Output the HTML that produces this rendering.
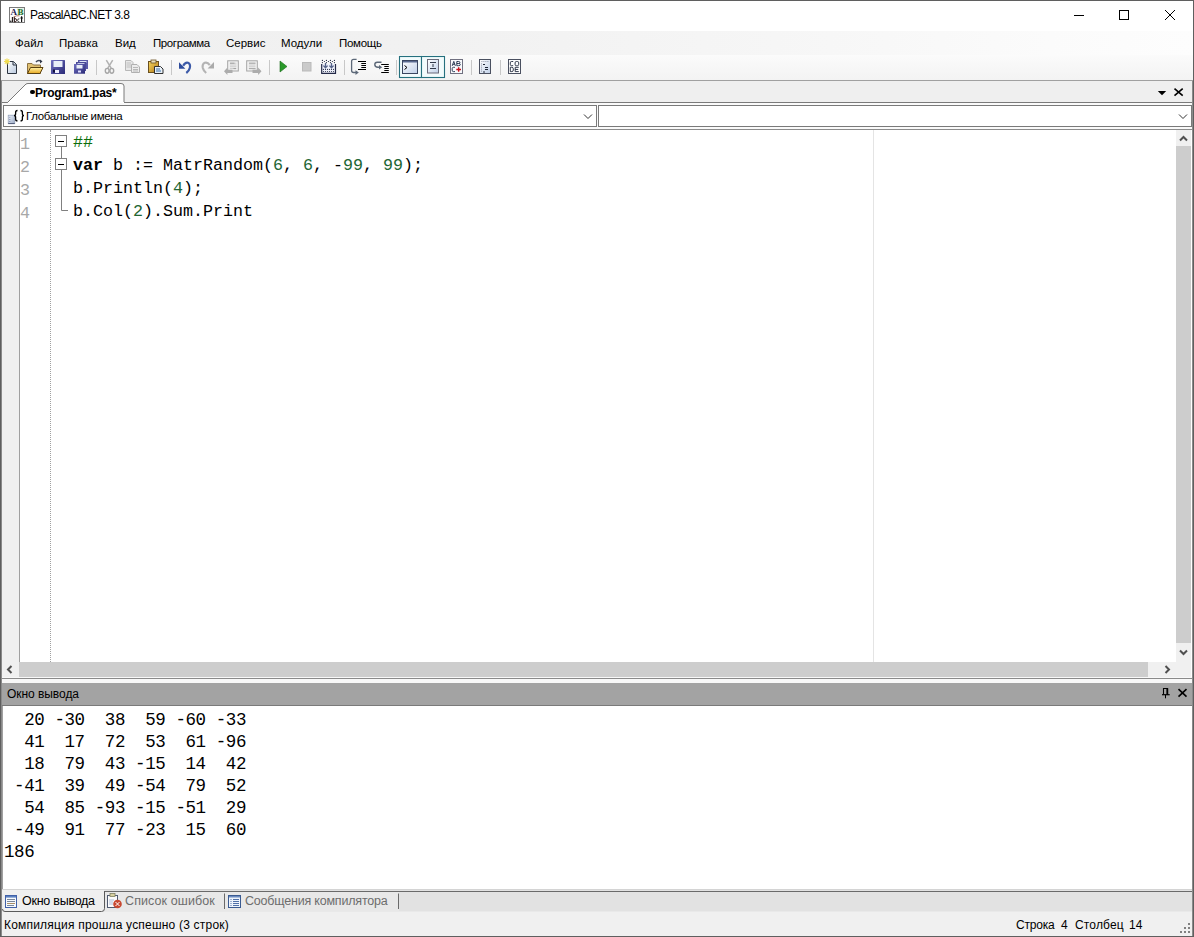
<!DOCTYPE html>
<html><head><meta charset="utf-8">
<style>
*{margin:0;padding:0;box-sizing:border-box}
html,body{width:1194px;height:937px;overflow:hidden;background:#fff}
body{position:relative;font-family:"Liberation Sans",sans-serif;font-size:12px;color:#000}
.a{position:absolute}
.ui{font-family:"Liberation Sans",sans-serif;font-size:11.5px;white-space:pre;line-height:14px}
.n{color:#226633}
.mono{font-family:"Liberation Mono",monospace;font-size:16.67px;white-space:pre}
</style></head><body>
<!-- window border -->
<div class="a" style="left:0;top:0;width:1194px;height:937px;border:1px solid #5f5f5f"></div>

<!-- title bar -->
<div class="a" style="left:1192px;top:81px;width:1px;height:855px;background:#8a8a8a;z-index:5"></div>
<div class="a" style="left:1px;top:81px;width:1px;height:855px;background:#8a8a8a;z-index:5"></div>
<div class="a" style="left:1px;top:1px;width:1192px;height:29px;background:#fff"></div>
<svg class="a" style="left:9px;top:7px" width="16" height="16">
<rect x="0.5" y="0.5" width="15" height="15" fill="#fff" stroke="#7a7a7a"/>
<rect x="8" y="1" width="7" height="6.5" fill="#e6f4e6"/>
<text x="1.6" y="7.6" font-family="Liberation Serif" font-size="9" font-weight="bold" fill="#1c1c54">A</text>
<text x="8.6" y="7.6" font-family="Liberation Serif" font-size="9" font-weight="bold" fill="#1a6a2a">B</text>
<circle cx="1.8" cy="14.3" r="0.8" fill="#101010"/>
<path d="M3.4 10V15M5.3 9.5V15" stroke="#1a1010" stroke-width="1.1"/>
<path d="M5.3 11.8Q7.6 11 7.6 13.3Q7.6 15 5.3 15" stroke="#3a2020" stroke-width="1" fill="none"/>
<path d="M10.4 11.8Q8.6 11.5 8.6 13.4Q8.6 15 10.4 15" stroke="#404040" stroke-width="1" fill="none"/>
<path d="M12.6 9.3V15M11.4 11H13.9" stroke="#101010" stroke-width="1.2"/>
<path d="M4.5 10.5Q7 8 10.5 8.8" stroke="#b07060" stroke-width="0.9" fill="none"/>
</svg>
<div class="a ui" style="left:30px;top:8px;font-size:12px;letter-spacing:-0.5px">PascalABC.NET 3.8</div>
<!-- window controls -->
<div class="a" style="left:1074px;top:15px;width:10px;height:1px;background:#000"></div>
<div class="a" style="left:1119px;top:10px;width:10px;height:10px;border:1px solid #000"></div>
<svg class="a" style="left:1164px;top:9px" width="12" height="12"><path d="M1 1L11 11M11 1L1 11" stroke="#000" stroke-width="1"/></svg>

<!-- menu bar -->
<div class="a" style="left:1px;top:31px;width:1192px;height:24px;background:linear-gradient(to right,#f0f0f0 0%,#f1f1f1 35%,#f6f6f6 65%,#fbfbfb 88%,#fdfdfd 100%)"></div>
<div class="a ui" style="left:15px;top:36px">Файл</div>
<div class="a ui" style="left:59px;top:36px">Правка</div>
<div class="a ui" style="left:115px;top:36px">Вид</div>
<div class="a ui" style="left:153px;top:36px;letter-spacing:-0.4px">Программа</div>
<div class="a ui" style="left:226px;top:36px">Сервис</div>
<div class="a ui" style="left:281px;top:36px">Модули</div>
<div class="a ui" style="left:339px;top:36px;letter-spacing:-0.3px">Помощь</div>

<!-- toolbar -->
<div class="a" style="left:1px;top:55px;width:1192px;height:25px;background:linear-gradient(#fbfbfb,#f3f3f3)"></div>
<div class="a" style="left:1px;top:80px;width:1192px;height:1px;background:#a0a0a0"></div>
<svg class="a" style="left:0;top:55px" width="530" height="25" viewBox="0 0 530 25">
<defs>
<linearGradient id="gPage" x1="0" y1="0" x2="1" y2="1"><stop offset="0" stop-color="#ffffff"/><stop offset="1" stop-color="#b8c8de"/></linearGradient>
<linearGradient id="gFold" x1="0" y1="0" x2="0" y2="1"><stop offset="0" stop-color="#fff2a8"/><stop offset="1" stop-color="#e8a820"/></linearGradient>
<linearGradient id="gDisk" x1="0" y1="0" x2="1" y2="1"><stop offset="0" stop-color="#7070c0"/><stop offset="1" stop-color="#2a2a78"/></linearGradient>
<linearGradient id="gClip" x1="0" y1="0" x2="1" y2="1"><stop offset="0" stop-color="#f8d860"/><stop offset="1" stop-color="#b07818"/></linearGradient>
<linearGradient id="gWin" x1="0" y1="0" x2="1" y2="1"><stop offset="0" stop-color="#ffffff"/><stop offset="1" stop-color="#c0d0e8"/></linearGradient>
</defs>
<!-- New -->
<path d="M7.5 6.5H13.5L16.5 9.5V18.5H7.5Z" fill="url(#gPage)" stroke="#2c3440" stroke-width="1"/>
<path d="M13 6.5V10H16.5" fill="#cfd8e6" stroke="#2c3440" stroke-width="1"/>
<path d="M4 6.5H10M7 3.5V9.5M4.8 4.3L9.2 8.7M9.2 4.3L4.8 8.7" stroke="#f0dc50" stroke-width="1.2"/>
<!-- Open -->
<path d="M27.5 8.5H32L33.5 10H40.5V18.5H27.5Z" fill="#e0c070" stroke="#8a7040" stroke-width="1"/>
<path d="M27.5 18.5L30.5 12.5H43L40 18.5Z" fill="url(#gFold)" stroke="#5a4010" stroke-width="1"/>
<path d="M36 7Q38 4.5 41 6" stroke="#404858" stroke-width="1.5" fill="none"/>
<path d="M40 4.5L42.5 6.5L40 8.5Z" fill="#303848"/>
<!-- Save -->
<rect x="51" y="5" width="14" height="14" rx="0.5" fill="url(#gDisk)"/>
<rect x="53.5" y="6" width="9" height="6" fill="#e8eef8"/>
<rect x="55" y="15" width="4" height="3" fill="#f0f0ff"/>
<rect x="53" y="14.5" width="2" height="3" fill="#101040"/>
<!-- Save all -->
<rect x="78" y="5" width="10" height="9" fill="#5a5aa8"/>
<rect x="79.5" y="6" width="7" height="1.5" fill="#e0e6f6"/>
<rect x="76" y="7" width="10" height="9" fill="#4a4a98"/>
<rect x="77.5" y="8.2" width="7" height="1.5" fill="#e0e6f6"/>
<rect x="74" y="9" width="11" height="9.7" fill="url(#gDisk)"/>
<rect x="76.5" y="10" width="6" height="3.5" fill="#e8eef8"/>
<rect x="78" y="15.5" width="3" height="2" fill="#e0e0ff"/>
<!-- sep -->
<rect x="96" y="5" width="1" height="15" fill="#c8c8c8"/>
<!-- Cut (disabled) -->
<path d="M106.3 5.2L111.2 13.2M112.7 5.2L107.8 13.2" stroke="#b2b2b2" stroke-width="1.5" fill="none"/>
<ellipse cx="107.2" cy="15.8" rx="1.9" ry="2.4" fill="none" stroke="#a6a6a6" stroke-width="1.4"/>
<ellipse cx="111.8" cy="15.8" rx="1.9" ry="2.4" fill="none" stroke="#a6a6a6" stroke-width="1.4"/>
<!-- Copy (disabled) -->
<path d="M125.5 5.5H131L133 7.5V15.5H125.5Z" fill="#e8e8e8" stroke="#b8b8b8"/>
<path d="M126.5 8H131M126.5 10H131M126.5 12H131" stroke="#c0c0c0"/>
<path d="M131.5 9.5H137L139.5 12V17.5H131.5Z" fill="#ececec" stroke="#b0b0b0"/>
<path d="M133 12.5H138M133 14.5H138M133 16H138" stroke="#b8b8b8"/>
<!-- Paste -->
<rect x="148.5" y="6.5" width="10" height="11" fill="url(#gClip)" stroke="#6a5020"/>
<rect x="151" y="5" width="5" height="3" fill="#e8e0c0" stroke="#6a5020" stroke-width="0.8"/>
<path d="M154.5 11.5H160.5L163 14V18.5H154.5Z" fill="#e8f0f8" stroke="#303030"/>
<path d="M156 14H160M156 16H161" stroke="#3a70a8" stroke-width="1.2"/>
<!-- sep -->
<rect x="171" y="5" width="1" height="15" fill="#c8c8c8"/>
<!-- Undo -->
<path d="M183.2 10.8Q185.3 7 188 7.8Q190.8 9 189.8 13Q189 16 186.3 18" stroke="#3c5aa8" stroke-width="2.2" fill="none"/>
<path d="M179 7.3V13.8H185.4Z" fill="#2e4c9c"/>
<!-- Redo (disabled) -->
<path d="M209.8 10.2Q207.5 6.8 204.8 7.8Q202 9 202.8 13Q203.6 16 206.2 18" stroke="#b4b4b4" stroke-width="2.2" fill="none"/>
<path d="M214 7V13.5H207.6Z" fill="#ababab"/>
<!-- Comment (disabled) -->
<rect x="227.7" y="5.8" width="10.6" height="10.2" fill="#f4f4f4" stroke="#a4a4a4" stroke-width="1"/>
<path d="M229.8 8.2H236.5M229.8 10H236.5M229.8 11.8H236.5M229.8 13.6H236.5" stroke="#c4c4c4" stroke-width="0.9"/>
<path d="M230 8.2H234.5M233.5 13.6H236" stroke="#a0a0a0" stroke-width="1"/>
<path d="M224 16.3L227.4 12.6V14.7H232.5V17.9H227.4V20Z" fill="#acacac"/>
<!-- Uncomment (disabled) -->
<rect x="246.7" y="5.8" width="10.6" height="10.2" fill="#f4f4f4" stroke="#a4a4a4" stroke-width="1"/>
<path d="M248.8 8.2H255.5M248.8 10H255.5M248.8 11.8H255.5M248.8 13.6H255.5" stroke="#c4c4c4" stroke-width="0.9"/>
<path d="M249 8.2H255.5M249 13.6H255.5" stroke="#a8a8a8" stroke-width="1"/>
<path d="M261.5 16.3L258.1 12.6V14.7H252.5V17.9H258.1V20Z" fill="#acacac"/>
<!-- sep -->
<rect x="269" y="5" width="1" height="15" fill="#c8c8c8"/>
<!-- Run -->
<path d="M280 6L287 11.5L280 17Z" fill="#2a9a2a" stroke="#1a6a1a" stroke-width="0.6"/>
<!-- Stop (disabled) -->
<rect x="302.5" y="7.5" width="8.5" height="8.5" fill="#cacaca" stroke="#bababa"/>
<!-- Compile -->
<rect x="322" y="9" width="13.5" height="9" fill="#eef0fa"/>
<path d="M321.7 9V18.4H335.5V9" stroke="#242a48" stroke-width="1.2" fill="none"/>
<path d="M325.5 8V12.6M323.4 10.6L325.5 12.8L327.6 10.6M331.5 8V12.6M329.4 10.6L331.5 12.8L333.6 10.6" stroke="#56648a" stroke-width="1.3" fill="none"/>
<circle cx="322.4" cy="5.4" r="0.6" fill="#202840"/><circle cx="326.4" cy="5.4" r="0.6" fill="#202840"/><circle cx="330.4" cy="5.4" r="0.6" fill="#202840"/><circle cx="334.4" cy="5.4" r="0.6" fill="#202840"/><circle cx="324.4" cy="6.5" r="0.6" fill="#202840"/><circle cx="328.4" cy="6.5" r="0.6" fill="#202840"/><circle cx="332.4" cy="6.5" r="0.6" fill="#202840"/><circle cx="322.4" cy="7.6" r="0.6" fill="#202840"/><circle cx="326.4" cy="7.6" r="0.6" fill="#202840"/><circle cx="330.4" cy="7.6" r="0.6" fill="#202840"/><circle cx="334.4" cy="7.6" r="0.6" fill="#202840"/><circle cx="323.5" cy="14.4" r="0.55" fill="#303850"/><circle cx="325.5" cy="14.4" r="0.55" fill="#303850"/><circle cx="327.5" cy="14.4" r="0.55" fill="#303850"/><circle cx="329.5" cy="14.4" r="0.55" fill="#303850"/><circle cx="331.5" cy="14.4" r="0.55" fill="#303850"/><circle cx="333.5" cy="14.4" r="0.55" fill="#303850"/><circle cx="323.5" cy="16.5" r="0.55" fill="#303850"/><circle cx="325.5" cy="16.5" r="0.55" fill="#303850"/><circle cx="327.5" cy="16.5" r="0.55" fill="#303850"/><circle cx="329.5" cy="16.5" r="0.55" fill="#303850"/><circle cx="331.5" cy="16.5" r="0.55" fill="#303850"/><circle cx="333.5" cy="16.5" r="0.55" fill="#303850"/>
<!-- sep -->
<rect x="344" y="5" width="1" height="15" fill="#c8c8c8"/>
<!-- Step into -->
<path d="M356.6 4.3H353.6Q351.6 4.3 351.6 6.3V15.5Q351.6 17.5 353.6 17.5H356" stroke="#5c6878" stroke-width="1.3" fill="none"/>
<path d="M355.5 15.3L358.8 17.5L355.5 19.9Z" fill="#5c6878"/>
<path d="M358 6.4H366M361.3 8.4H366M361.3 10.4H366M361.3 12.4H366M358 14.4H366" stroke="#000" stroke-width="1.05"/>
<!-- Step over -->
<path d="M381.5 7.3H377.3Q374.8 7.3 374.8 9.5Q374.8 12.2 378 12.2H380" stroke="#5c6878" stroke-width="1.4" fill="none"/>
<path d="M379 10L382.2 12.3L379 14.6Z" fill="#5c6878"/>
<path d="M381.2 9.4H388.8M384.3 11.4H388.8M384.3 13.4H388.8M384.3 15.4H388.8M381.2 17.4H388.8" stroke="#000" stroke-width="1.05"/>
<!-- sep -->
<rect x="396" y="5" width="1" height="15" fill="#c8c8c8"/>
<!-- pressed buttons -->
<rect x="399.5" y="1.5" width="22" height="21" fill="#f2fbfc" stroke="#25707e" stroke-width="1.1"/>
<rect x="421.5" y="1.5" width="23" height="21" fill="#f2fbfc" stroke="#25707e" stroke-width="1.1"/>
<rect x="402.5" y="5.5" width="15" height="13" fill="url(#gWin)" stroke="#3a4660" stroke-width="1"/>
<rect x="403" y="6" width="14" height="1.5" fill="#5a6a90"/>
<path d="M404.5 10.5L407 12.5L404.5 14.5" stroke="#000" stroke-width="1" fill="none"/>
<rect x="427.5" y="4.5" width="11" height="13.5" fill="url(#gWin)" stroke="#6a6a7a" stroke-width="1"/>
<path d="M430 7.5H436M433 9V12M430 13.5H436" stroke="#303848" stroke-width="1"/>
<!-- ABC+ -->
<rect x="450.5" y="4.5" width="12" height="14" fill="#f8fafd" stroke="#707080" stroke-width="1"/>
<path d="M452.2 10.9L453.8 6.4L455.4 10.9M452.8 9.3H454.8" stroke="#1c2c48" stroke-width="0.9" fill="none"/>
<path d="M456.8 10.7V6.5H458.6Q459.9 6.5 459.9 7.5Q459.9 8.5 458.6 8.5H456.8M458.6 8.5Q460.3 8.5 460.3 9.6Q460.3 10.7 458.6 10.7H456.8" stroke="#1c2c48" stroke-width="0.9" fill="none"/>
<path d="M455 12.3H453.4Q452.2 12.3 452.2 13.6V15.3Q452.2 16.6 453.4 16.6H455" stroke="#1c2c48" stroke-width="0.9" fill="none"/>
<path d="M456.3 14.5H461M458.65 12.2V16.8" stroke="#c8101a" stroke-width="1.4"/>
<!-- sep -->
<rect x="471" y="5" width="1" height="15" fill="#c8c8c8"/>
<!-- Format -->
<rect x="479.5" y="4.5" width="11" height="14" fill="url(#gWin)" stroke="#4a5060" stroke-width="1"/>
<path d="M481.5 6.5H489.5M481.5 8.5V17" stroke="#606880" stroke-width="0.8" stroke-dasharray="0.8 1.2"/>
<path d="M483 9.5H485M485 12.5H488M485 14.5H488M483 17H485" stroke="#202838" stroke-width="1"/>
<!-- sep -->
<rect x="500" y="5" width="1" height="15" fill="#c8c8c8"/>
<!-- CODE -->
<rect x="508.5" y="4.5" width="12" height="14" fill="#fdfdfd" stroke="#4a5060" stroke-width="1"/>
<path d="M513.2 6.5H511.6Q510.3 6.5 510.3 7.8V9.4Q510.3 10.7 511.6 10.7H513.2" stroke="#1c2438" stroke-width="0.9" fill="none"/>
<path d="M516.4 6.5H517.4Q518.7 6.5 518.7 7.8V9.4Q518.7 10.7 517.4 10.7H516.4Q515.1 10.7 515.1 9.4V7.8Q515.1 6.5 516.4 6.5Z" stroke="#1c2438" stroke-width="0.9" fill="none"/>
<path d="M510.3 12.3V16.6H511.8Q513.3 16.6 513.3 15.1V13.8Q513.3 12.3 511.8 12.3Z" stroke="#1c2438" stroke-width="0.9" fill="none"/>
<path d="M518.8 12.3H515.2V16.6H518.8M515.2 14.45H518.2" stroke="#1c2438" stroke-width="0.9" fill="none"/>
</svg>


<!-- document tab strip -->
<div class="a" style="left:1px;top:81px;width:1192px;height:21px;background:#efefef"></div>
<div class="a" style="left:1px;top:102px;width:1192px;height:1px;background:#7a7a7a"></div>
<svg class="a" style="left:7px;top:83px" width="120" height="21">
<path d="M0.5 19.5 L19 1 Q20 0.5 21 0.5 L114 0.5 Q117 0.5 117 3 L117 20 L0.5 20 Z" fill="#fff" stroke="#7a7a7a" stroke-width="1"/>
<rect x="1" y="19" width="116" height="2" fill="#fff"/>
</svg>
<div class="a" style="left:30px;top:89.5px;width:4.6px;height:4.6px;border-radius:50%;background:#000"></div><div class="a ui" style="left:35px;top:86px;font-weight:bold;font-size:12px;letter-spacing:-0.25px">Program1.pas*</div>
<svg class="a" style="left:1157px;top:90px" width="10" height="6"><path d="M0.8 1 L9.2 1 L5 5.2 Z" fill="#000"/></svg>
<svg class="a" style="left:1173px;top:87px" width="11" height="10"><path d="M1.5 1.6L9.7 8.6M9.7 1.6L1.5 8.6" stroke="#000" stroke-width="1.6"/></svg>

<!-- combo row -->
<div class="a" style="left:1px;top:103px;width:1192px;height:26px;background:#fafafa"></div>
<div class="a" style="left:3px;top:105px;width:594px;height:22px;border:1px solid #7a7a7a;background:#fff"></div>
<div class="a" style="left:598px;top:105px;width:594px;height:22px;border:1px solid #7a7a7a;background:#fff"></div>
<svg class="a" style="left:583px;top:113px" width="10" height="7"><path d="M1 1.5L5 5.5L9 1.5" stroke="#333" fill="none" stroke-width="1"/></svg>
<svg class="a" style="left:1178px;top:113px" width="10" height="7"><path d="M1 1.5L5 5.5L9 1.5" stroke="#333" fill="none" stroke-width="1"/></svg>
<svg class="a" style="left:7px;top:108px" width="20" height="18">
<defs><linearGradient id="gCmb" x1="0" y1="0" x2="1" y2="1"><stop offset="0" stop-color="#f4f8ff"/><stop offset="1" stop-color="#9aaac4"/></linearGradient></defs>
<rect x="1.2" y="7.2" width="6.6" height="8.4" fill="url(#gCmb)" stroke="#8c9ab4" stroke-width="0.7"/>
<path d="M1.2 15.6H7.8" stroke="#505a78" stroke-width="1"/>
<path d="M2.3 9.3H3.3M2.3 11.5H3.3M2.3 13.5H3.3" stroke="#6070a0" stroke-width="0.8"/>
</svg>
<svg class="a" style="left:12px;top:108px" width="14" height="16">
<path d="M5.5 2.5Q3.6 2.5 3.6 4.5V6.3Q3.6 7.5 2 7.5Q3.6 7.5 3.6 8.7V10.9Q3.6 12.9 5.5 12.9" stroke="#000" stroke-width="1.3" fill="none"/>
<path d="M8.5 2.5Q10.4 2.5 10.4 4.5V6.3Q10.4 7.5 12 7.5Q10.4 7.5 10.4 8.7V10.9Q10.4 12.9 8.5 12.9" stroke="#000" stroke-width="1.3" fill="none"/>
</svg>
<div class="a ui" style="left:26px;top:109px;letter-spacing:-0.35px">Глобальные имена</div>

<!-- editor -->
<div class="a" style="left:1px;top:129px;width:1192px;height:1px;background:#8c8c8c"></div>
<div class="a" style="left:1px;top:130px;width:18px;height:532px;background:#f0f0f0"></div>
<div class="a" style="left:19px;top:130px;width:1px;height:532px;background:#a0a0a0"></div>
<div class="a" style="left:50px;top:130px;width:1px;height:532px;border-left:1px dotted #a0a0a0"></div>
<div class="a" style="left:873px;top:130px;width:1px;height:532px;background:#e4e4e4"></div>

<!-- line numbers -->
<div class="a mono" style="left:20px;top:133px;color:#a8a8a8;line-height:23px">1
2
3
4</div>
<!-- fold markers -->
<svg class="a" style="left:54px;top:134px" width="16" height="80">
<rect x="1.5" y="1.5" width="11" height="11" fill="#fff" stroke="#808080"/>
<path d="M4 7.5H10" stroke="#000"/>
<rect x="1.5" y="24.5" width="11" height="11" fill="#fff" stroke="#808080"/>
<path d="M4 30.5H10" stroke="#000"/>
<path d="M7.5 13V24M7.5 36V76.5H14" stroke="#808080" fill="none"/>
</svg>
<div class="a mono" style="left:73px;top:131px;line-height:23px"><span style="color:#0c6e0c">##</span>
<b>var</b> b := MatrRandom(<span class="n">6</span>, <span class="n">6</span>, -<span class="n">99</span>, <span class="n">99</span>);
b.Println(<span class="n">4</span>);
b.Col(<span class="n">2</span>).Sum.Print</div>

<!-- vertical scrollbar -->
<div class="a" style="left:1176px;top:130px;width:15px;height:532px;background:#f0f0f0"></div>
<div class="a" style="left:1176px;top:146px;width:15px;height:497px;background:#cdcdcd"></div>
<svg class="a" style="left:1179px;top:135px" width="9" height="7"><path d="M1 5.5L4.5 2L8 5.5" stroke="#505050" fill="none" stroke-width="2"/></svg>
<svg class="a" style="left:1179px;top:649px" width="9" height="7"><path d="M1 1.5L4.5 5L8 1.5" stroke="#505050" fill="none" stroke-width="2"/></svg>

<!-- horizontal scrollbar -->
<div class="a" style="left:1px;top:662px;width:1175px;height:15px;background:#f0f0f0"></div>
<div class="a" style="left:19px;top:662px;width:1129px;height:15px;background:#cdcdcd"></div>
<div class="a" style="left:1176px;top:662px;width:15px;height:15px;background:#f0f0f0"></div>
<svg class="a" style="left:6px;top:665px" width="7" height="9"><path d="M5.5 1L2 4.5L5.5 8" stroke="#505050" fill="none" stroke-width="2"/></svg>
<svg class="a" style="left:1164px;top:665px" width="7" height="9"><path d="M1.5 1L5 4.5L1.5 8" stroke="#505050" fill="none" stroke-width="2"/></svg>

<!-- splitter -->
<div class="a" style="left:1px;top:677px;width:1192px;height:6px;background:#f8f8f8"></div>
<div class="a" style="left:1px;top:678px;width:1192px;height:1px;background:#8a8a8a"></div>

<!-- output header -->
<div class="a" style="left:2px;top:683px;width:1190px;height:23px;background:#a3a3a3"></div>
<div class="a" style="left:2px;top:705px;width:1190px;height:1px;background:#7a7a7a"></div>
<div class="a ui" style="left:7px;top:687px;font-size:12px;letter-spacing:-0.05px">Окно вывода</div>
<svg class="a" style="left:1160px;top:686px" width="12" height="14"><path d="M3.5 2.5H7.5V8.5M3.5 2V8.5" stroke="#000" fill="none" stroke-width="1.1"/><path d="M7.3 2.3V8.5" stroke="#000" stroke-width="1.8"/><path d="M2 8.7H9.7" stroke="#000" stroke-width="1.2"/><path d="M5.5 9V12.3" stroke="#000" stroke-width="1"/></svg>
<svg class="a" style="left:1177px;top:688px" width="11" height="10"><path d="M1.5 1.2L9.5 8.6M9.5 1.2L1.5 8.6" stroke="#000" stroke-width="1.6"/></svg>

<!-- output content -->
<div class="a" style="left:2px;top:706px;width:1190px;height:184px;background:#fff;border-left:1px solid #a0a0a0"></div>
<div class="a mono" style="left:4px;top:709px;line-height:22px;font-size:17.5px;letter-spacing:-0.42px">  20 -30  38  59 -60 -33
  41  17  72  53  61 -96
  18  79  43 -15  14  42
 -41  39  49 -54  79  52
  54  85 -93 -15 -51  29
 -49  91  77 -23  15  60
186</div>

<!-- bottom tabs -->
<div class="a" style="left:1px;top:889px;width:1192px;height:23px;background:#e2e2e2"></div><div class="a" style="left:104px;top:891px;width:295px;height:21px;background:#e8e8e8"></div><div class="a" style="left:1px;top:911px;width:1192px;height:1px;background:#e9e9e9"></div>
<div class="a" style="left:2px;top:889px;width:1190px;height:1px;background:#d4d4d4"></div>
<svg class="a" style="left:1px;top:889px" width="1192" height="24">
<path d="M103.5 2.5H1192" stroke="#6a6a6a" stroke-width="1"/>
<path d="M1 1H103.5V19.5Q103.5 22.5 100.5 22.5H4Q1.5 22.5 1.5 20Z" fill="#efefef"/>
<path d="M103.5 2V19.5Q103.5 22.5 100.5 22.5H4Q1.5 22.5 1.5 20" stroke="#5a5a5a" stroke-width="1" fill="none"/>
<path d="M223.5 4.5V20M397.5 4.5V20" stroke="#6a6a6a" stroke-width="1"/>
</svg>
<svg class="a" style="left:5px;top:895px" width="12" height="13">
<rect x="0.5" y="0.5" width="11" height="12" fill="#f6f9fd" stroke="#4060a8"/>
<rect x="1" y="1" width="10" height="1.6" fill="#5a80c0"/>
<path d="M2 4.5H10M2 6.5H10M2 8.5H10M2 10.5H9" stroke="#6a7890" stroke-width="0.9"/>
<path d="M2 8.5H10" stroke="#b09060" stroke-width="0.9"/>
</svg>
<div class="a ui" style="left:22px;top:894px;font-size:12.5px;letter-spacing:-0.25px">Окно вывода</div>
<svg class="a" style="left:107px;top:893px" width="16" height="16">
<rect x="0.5" y="2.5" width="10" height="12" fill="#fbfbfb" stroke="#505a70"/>
<rect x="3" y="0.5" width="5" height="3" fill="#d8d0a0" stroke="#808060" stroke-width="0.8"/>
<path d="M2 7H7M2 9H6M2 11H6" stroke="#a0b0d0" stroke-width="0.8"/>
<circle cx="10.5" cy="11" r="4.3" fill="#c84830"/>
<path d="M8.5 9L12.5 13M12.5 9L8.5 13" stroke="#fff" stroke-width="1"/>
</svg>
<div class="a ui" style="left:125px;top:894px;font-size:12.5px;color:#6d6d6d;letter-spacing:0.1px">Список ошибок</div>
<svg class="a" style="left:228px;top:895px" width="14" height="14">
<rect x="0.5" y="0.5" width="12" height="12" fill="#eef4fc" stroke="#3a5a90"/>
<rect x="1" y="1" width="11" height="1.5" fill="#6a8ac0"/>
<path d="M2.5 4.5H3.5M2.5 6.5H3.5M2.5 8.5H3.5M2.5 10.5H3.5M5 4.5H11M5 6.5H11M5 8.5H11M5 10.5H11" stroke="#5070a8" stroke-width="1"/>
</svg>
<div class="a ui" style="left:245px;top:894px;font-size:12.5px;color:#6d6d6d;letter-spacing:-0.2px">Сообщения компилятора</div>

<!-- status bar -->
<div class="a" style="left:1px;top:912px;width:1192px;height:24px;background:#f0f0f0"></div>
<div class="a ui" style="left:4px;top:918px;font-size:12px;letter-spacing:0.2px">Компиляция прошла успешно (3 строк)</div>
<div class="a ui" style="left:1016px;top:918px;font-size:12px;letter-spacing:-0.2px">Строка</div><div class="a ui" style="left:1061px;top:918px;font-size:12px">4</div><div class="a ui" style="left:1075px;top:918px;font-size:12px;letter-spacing:0.15px">Столбец</div><div class="a ui" style="left:1129px;top:918px;font-size:12px">14</div>
<svg class="a" style="left:1178px;top:920px" width="14" height="15">
<rect x="10" y="3" width="2" height="2" fill="#808080"/>
<rect x="6" y="7" width="2" height="2" fill="#808080"/><rect x="10" y="7" width="2" height="2" fill="#808080"/>
<rect x="2" y="11" width="2" height="2" fill="#808080"/><rect x="6" y="11" width="2" height="2" fill="#808080"/><rect x="10" y="11" width="2" height="2" fill="#808080"/>
</svg>
</body></html>
